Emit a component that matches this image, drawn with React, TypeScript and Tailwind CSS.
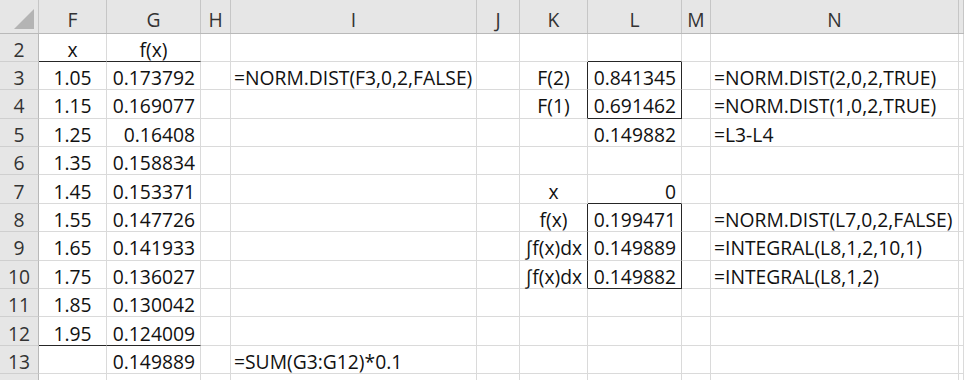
import React from "react";

type Align = "l" | "c" | "r";

interface CellDef {
    v: string;
    a: Align;
}

const COLUMNS = ["F", "G", "H", "I", "J", "K", "L", "M", "N", ""];

const GRID = "grid grid-cols-[39px_68px_94px_30px_246px_43px_68px_94px_29px_248px_1fr]";

// sheet contents keyed by column, one entry per row
const ROWS: { n: number; cells: Record<string, CellDef> }[] = [
    { n: 2, cells: { F: { v: "x", a: "c" }, G: { v: "f(x)", a: "c" } } },
    {
        n: 3,
        cells: {
            F: { v: "1.05", a: "c" },
            G: { v: "0.173792", a: "r" },
            I: { v: "=NORM.DIST(F3,0,2,FALSE)", a: "l" },
            K: { v: "F(2)", a: "c" },
            L: { v: "0.841345", a: "r" },
            N: { v: "=NORM.DIST(2,0,2,TRUE)", a: "l" },
        },
    },
    {
        n: 4,
        cells: {
            F: { v: "1.15", a: "c" },
            G: { v: "0.169077", a: "r" },
            K: { v: "F(1)", a: "c" },
            L: { v: "0.691462", a: "r" },
            N: { v: "=NORM.DIST(1,0,2,TRUE)", a: "l" },
        },
    },
    {
        n: 5,
        cells: {
            F: { v: "1.25", a: "c" },
            G: { v: "0.16408", a: "r" },
            L: { v: "0.149882", a: "r" },
            N: { v: "=L3-L4", a: "l" },
        },
    },
    { n: 6, cells: { F: { v: "1.35", a: "c" }, G: { v: "0.158834", a: "r" } } },
    {
        n: 7,
        cells: {
            F: { v: "1.45", a: "c" },
            G: { v: "0.153371", a: "r" },
            K: { v: "x", a: "c" },
            L: { v: "0", a: "r" },
        },
    },
    {
        n: 8,
        cells: {
            F: { v: "1.55", a: "c" },
            G: { v: "0.147726", a: "r" },
            K: { v: "f(x)", a: "c" },
            L: { v: "0.199471", a: "r" },
            N: { v: "=NORM.DIST(L7,0,2,FALSE)", a: "l" },
        },
    },
    {
        n: 9,
        cells: {
            F: { v: "1.65", a: "c" },
            G: { v: "0.141933", a: "r" },
            K: { v: "∫f(x)dx", a: "c" },
            L: { v: "0.149889", a: "r" },
            N: { v: "=INTEGRAL(L8,1,2,10,1)", a: "l" },
        },
    },
    {
        n: 10,
        cells: {
            F: { v: "1.75", a: "c" },
            G: { v: "0.136027", a: "r" },
            K: { v: "∫f(x)dx", a: "c" },
            L: { v: "0.149882", a: "r" },
            N: { v: "=INTEGRAL(L8,1,2)", a: "l" },
        },
    },
    { n: 11, cells: { F: { v: "1.85", a: "c" }, G: { v: "0.130042", a: "r" } } },
    { n: 12, cells: { F: { v: "1.95", a: "c" }, G: { v: "0.124009", a: "r" } } },
    {
        n: 13,
        cells: {
            G: { v: "0.149889", a: "r" },
            I: { v: "=SUM(G3:G12)*0.1", a: "l" },
        },
    },
];

// cell edges drawn as solid borders instead of gridlines
const DARK_RIGHT = new Set(["K3", "K4", "L3", "L4", "K8", "K9", "K10", "L8", "L9", "L10"]);
const DARK_BOTTOM = new Set(["F2", "G2", "F12", "G12", "L2", "L4", "L7", "L10"]);

const alignClass: Record<Align, string> = {
    l: "justify-start pl-[3px]",
    c: "justify-center",
    r: "justify-end pr-[5px]",
};

const SheetCell = ({ col, row, cell }: { col: string; row: number; cell?: CellDef }) => {
    const id = `${col}${row}`;
    const right = DARK_RIGHT.has(id) ? "border-r-[#262626]" : "border-r-[#dadada]";
    const bottom = DARK_BOTTOM.has(id) ? "border-b-[#262626]" : "border-b-[#dadada]";
    return (
        <div
            className={`flex items-end pb-[2px] overflow-visible whitespace-nowrap border-r border-b ${right} ${bottom} ${
                cell ? alignClass[cell.a] : ""
            }`}
        >
            {cell?.v}
        </div>
    );
};

const App = () => {
    return (
        <div className="w-[964px] h-[380px] overflow-hidden bg-white text-[19.3px] leading-none text-[#111] font-['Open_Sans','Liberation_Sans',sans-serif]">
            {/* column letters */}
            <div className={`${GRID} h-[33.5px] bg-[#e6e6e6] border-b border-[#b9b9b9]`}>
                <div className="flex items-end justify-end pr-[4px] pb-[4px] border-r border-[#c6c6c6]">
                    <svg width="20" height="20" viewBox="0 0 20 20">
                        <polygon points="20,0 20,20 0,20" fill="#b4b4b4" />
                    </svg>
                </div>
                {COLUMNS.map((c, i) => (
                    <div
                        key={i}
                        className="flex items-end justify-center pb-[3px] text-[#333] border-r border-[#c6c6c6]"
                    >
                        {c}
                    </div>
                ))}
            </div>

            {ROWS.map((r) => (
                <div key={r.n} className={`${GRID} h-[28.4px]`}>
                    <div className="flex items-end justify-center pb-[2px] bg-[#e6e6e6] text-[#333] border-r border-b border-r-[#b9b9b9] border-b-[#cfcfcf]">
                        {r.n}
                    </div>
                    {COLUMNS.map((c, i) => (
                        <SheetCell key={i} col={c || "O"} row={r.n} cell={c ? r.cells[c] : undefined} />
                    ))}
                </div>
            ))}

            {/* next row, mostly below the fold */}
            <div className={`${GRID} h-[28.4px]`}>
                <div className="bg-[#e6e6e6] border-r border-[#b9b9b9]" />
                {COLUMNS.map((_, i) => (
                    <div key={i} className="border-r border-[#dadada]" />
                ))}
            </div>
        </div>
    );
};

export default App;
